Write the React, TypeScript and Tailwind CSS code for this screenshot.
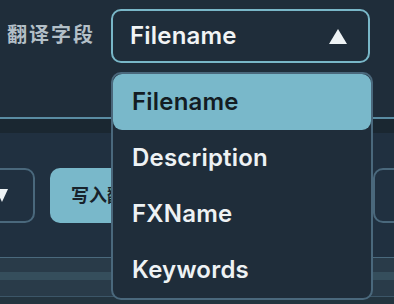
import React from "react";

const font = { fontFamily: 'Inter, "Noto Sans CJK SC", sans-serif' };

export default function App() {
  const items = ["Filename", "Description", "FXName", "Keywords"];
  return (
    <div
      className="relative w-[394px] h-[304px] overflow-hidden bg-[#1f2d3a]"
      style={font}
    >
      {/* top row */}
      <div className="h-[117px] pt-[9px]">
        <div className="flex items-center">
          <div className="shrink-0 pl-[7px] w-[111px] text-[20px] font-bold text-[#b3bfc7] tracking-[2px] leading-none -mt-[2px]">
            翻译字段
          </div>
          <div className="shrink-0 flex items-center justify-between w-[259px] h-[54px] rounded-[10px] border-2 border-[#79b7c8] pl-[17px] pr-[21px]">
            <span className="text-[24px] font-semibold text-[#f1f4f5] leading-none tracking-[0.2px]">
              Filename
            </span>
            <svg width="18" height="15" viewBox="0 0 18 15">
              <polygon points="9,0 18,15 0,15" fill="#eef3f5" />
            </svg>
          </div>
        </div>
      </div>
      <div className="h-[2px] bg-[#5a8ca3]" />
      <div className="h-[14px] bg-[#1a2731]" />
      <div className="h-[124px] bg-[#203040] pt-[35px]">
        <div className="flex items-center">
          <div className="shrink-0 -ml-[25px] w-[60px] h-[55px] rounded-[10px] border-2 border-[#4a687c] flex items-center justify-end pr-[25px]">
            <svg width="12" height="13" viewBox="0 0 12 13">
              <polygon points="0,0 12,0 6,13" fill="#eef3f5" />
            </svg>
          </div>
          <div className="shrink-0 ml-[15px] w-[140px] h-[55px] rounded-[10px] bg-[#79b8ca] flex items-center pl-[21px] text-[18px] font-bold text-[#17222b]">
            写入翻译
          </div>
          <div className="shrink-0 ml-[183px] w-[60px] h-[55px] rounded-[10px] border-2 border-[#4a687c]" />
        </div>
      </div>
      <div className="h-[1px] bg-[#4a697d]" />
      <div className="h-[14px] bg-[#293b49]" />
      <div className="h-[8px] bg-[#354e5c]" />
      <div className="h-[16px] bg-[#293b49]" />
      <div className="h-[1px] bg-[#3c5668]" />
      <div className="h-[7px] bg-[#23343f]" />

      {/* dropdown */}
      <div className="absolute left-[111px] top-[72px] w-[262px] rounded-[10px] border-2 border-[#4a687c] bg-[#1f2d3a]">
        {items.map((it, i) => (
          <div
            key={it}
            className={
              i === 0
                ? "h-[56px] flex items-center pl-[19px] rounded-[9px] bg-[#79b8ca] text-[24px] font-semibold tracking-[0.2px] text-[#131c23]"
                : "h-[56px] flex items-center pl-[19px] text-[24px] font-semibold tracking-[0.2px] text-[#eef2f4]"
            }
          >
            {it}
          </div>
        ))}
      </div>
    </div>
  );
}
